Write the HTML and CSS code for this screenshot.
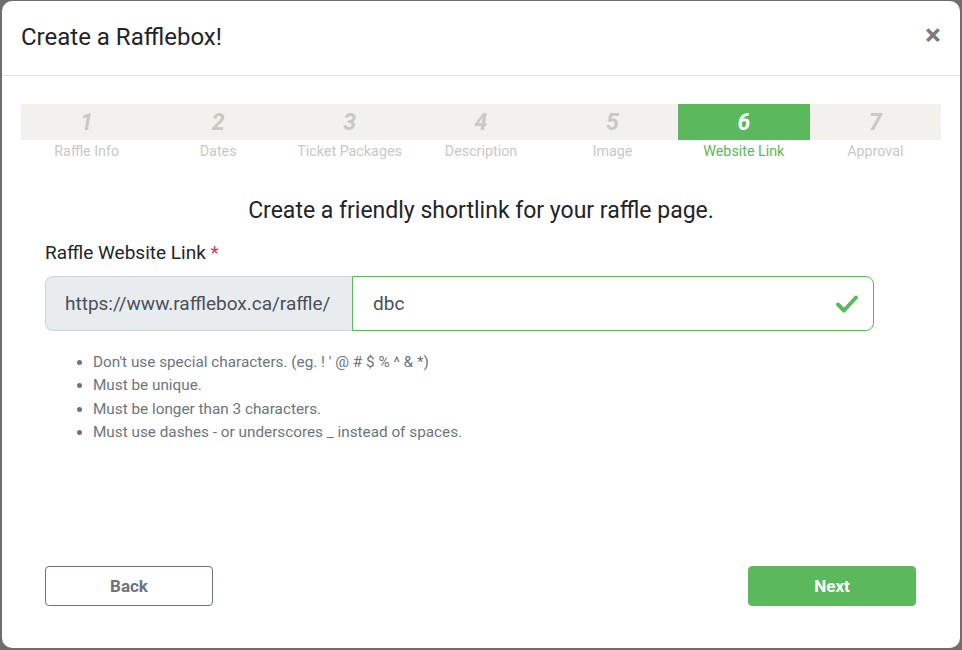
FILE: index.html
```html
<!DOCTYPE html>
<html>
<head>
<meta charset="utf-8">
<link rel="stylesheet" href="styles.css">
</head>
<body>
<div class="modal">
  <div class="modal-header">
    <h1 class="title">Create a Rafflebox!</h1>
    <span class="close">&times;</span>
  </div>
  <div class="modal-body">
    <ol class="steps">
      <li class="step"><span class="num">1</span><span class="lbl">Raffle Info</span></li>
      <li class="step"><span class="num">2</span><span class="lbl">Dates</span></li>
      <li class="step"><span class="num">3</span><span class="lbl">Ticket Packages</span></li>
      <li class="step"><span class="num">4</span><span class="lbl">Description</span></li>
      <li class="step"><span class="num">5</span><span class="lbl">Image</span></li>
      <li class="step active"><span class="num">6</span><span class="lbl">Website Link</span></li>
      <li class="step"><span class="num">7</span><span class="lbl">Approval</span></li>
    </ol>
    <div class="content">
      <h2 class="heading">Create a friendly shortlink for your raffle page.</h2>
      <label class="field-label">Raffle Website Link <span class="req">*</span></label>
      <div class="input-group">
        <span class="prepend">https://www.rafflebox.ca/raffle/</span>
        <div class="input">
          <span class="value">dbc</span>
          <svg class="check" width="24" height="20" viewBox="0 0 24 20"><path d="M3 10.5 L9 16.5 L21 3.5" fill="none" stroke="#5cb85c" stroke-width="4" stroke-linecap="round" stroke-linejoin="round"/></svg>
        </div>
      </div>
      <ul class="rules">
        <li>Don't use special characters. (eg. ! ' @ # $ % ^ &amp; *)</li>
        <li>Must be unique.</li>
        <li>Must be longer than 3 characters.</li>
        <li>Must use dashes - or underscores _ instead of spaces.</li>
      </ul>
      <div class="actions">
        <button class="btn btn-back">Back</button>
        <button class="btn btn-next">Next</button>
      </div>
    </div>
  </div>
</div>
</body>
</html>
```
FILE: styles.css
```css
* { box-sizing: border-box; }
html, body { margin: 0; padding: 0; }
body {
  background: #6e6e6e;
  font-family: Roboto, "Liberation Sans", Arial, sans-serif;
  width: 962px;
  height: 650px;
  overflow: hidden;
  padding: 1px 2px 2px 2px;
}
.modal {
  background: #fff;
  border-radius: 10px;
  width: 958px;
  height: 647px;
  display: flex;
  flex-direction: column;
}
.modal-header {
  height: 75px;
  border-bottom: 1px solid #dee2e6;
  display: flex;
  align-items: center;
  justify-content: space-between;
  padding: 0 19px 2px 19px;
}
.title {
  margin: 0;
  font-size: 24px;
  font-weight: 400;
  color: #212529;
}
.close {
  font-size: 30px;
  font-weight: 700;
  color: #7a7a7a;
  line-height: 1;
  margin-top: -4px;
}
.modal-body {
  padding: 28px 19px 0 19px;
  flex: 1;
  display: flex;
  flex-direction: column;
}
.steps {
  list-style: none;
  margin: 0;
  padding: 0;
  display: grid;
  grid-template-columns: repeat(7, 1fr);
}
.step {
  display: flex;
  flex-direction: column;
  align-items: center;
}
.num {
  display: block;
  width: 100%;
  height: 36px;
  line-height: 37px;
  text-align: center;
  background: #f2f1ee;
  font-size: 23px;
  font-weight: 700;
  font-style: italic;
  color: #c8c8c6;
}
.lbl {
  font-size: 14.3px;
  line-height: 22px;
  color: #c8c8c8;
}
.step.active .num { background: #5cb85c; color: #fff; }
.step.active .lbl { color: #5cb85c; }
.content {
  padding: 0 24px;
  display: flex;
  flex-direction: column;
  flex: 1;
}
.heading {
  margin: 34px 0 0 0;
  font-size: 23px;
  font-weight: 400;
  line-height: 30px;
  text-align: center;
  color: #212529;
}
.field-label {
  margin-top: 14px;
  font-size: 19px;
  line-height: 26px;
  color: #212529;
}
.req { color: #dc3545; }
.input-group {
  display: flex;
  height: 55px;
  margin-top: 10px;
  width: 829px;
}
.prepend {
  background: #e9ecef;
  border: 1px solid #ced4da;
  border-right: 0;
  border-radius: 8px 0 0 8px;
  width: 307px;
  display: flex;
  align-items: center;
  padding-left: 19px;
  font-size: 19px;
  color: #495057;
}
.input {
  flex: 1;
  border: 1px solid #5cb85c;
  border-radius: 0 8px 8px 0;
  display: flex;
  align-items: center;
  justify-content: space-between;
  padding: 0 14px 0 20px;
  font-size: 19px;
  color: #495057;
}
.check { display: block; }
.rules {
  margin: 20px 0 0 0;
  padding-left: 48px;
  font-size: 15.3px;
  line-height: 23.3px;
  color: #6c757d;
}
.actions {
  margin-top: auto;
  margin-bottom: 42px;
  display: flex;
  justify-content: space-between;
  width: 871px;
}
.btn {
  width: 168px;
  height: 40px;
  border-radius: 4px;
  font-family: Roboto, "Liberation Sans", Arial, sans-serif;
  font-size: 17px;
  font-weight: 700;
  cursor: pointer;
}
.btn-back {
  background: #fff;
  border: 1px solid #6c757d;
  color: #6c757d;
}
.btn-next {
  background: #5cb85c;
  border: 1px solid #5cb85c;
  color: #fff;
}
```
